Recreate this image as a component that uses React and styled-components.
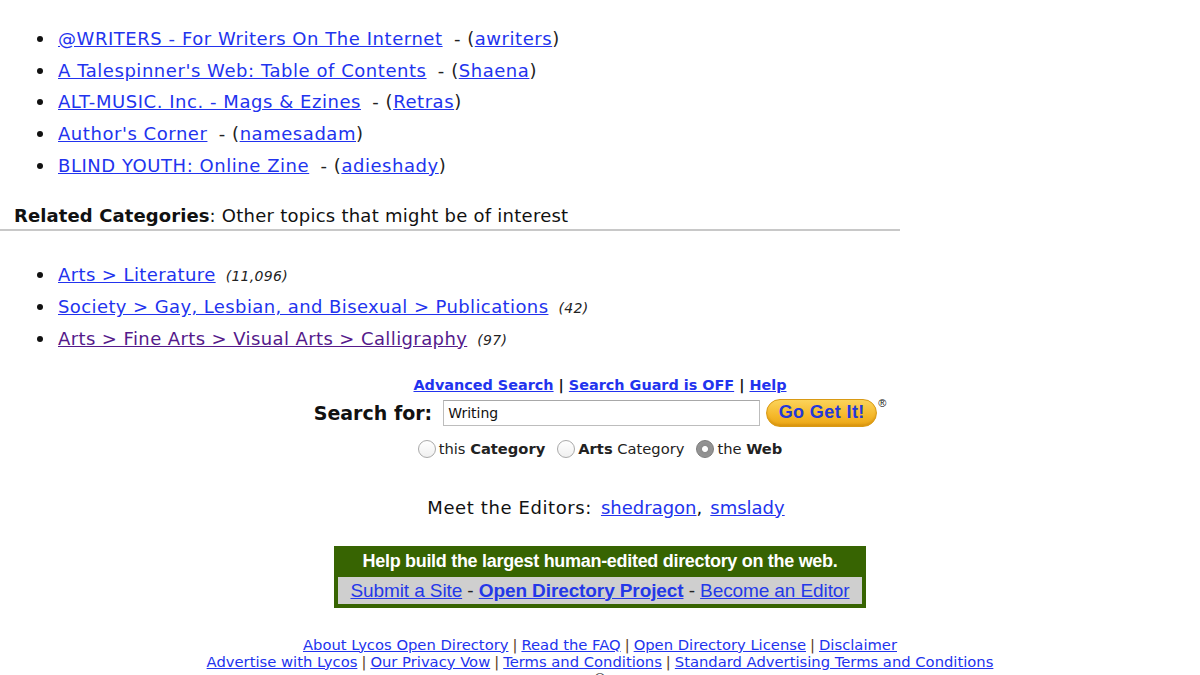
import React from "react";
import styled, { createGlobalStyle } from "styled-components";

const GlobalStyle = createGlobalStyle`
  html, body {
    margin: 0;
    padding: 0;
    background: #ffffff;
    font-family: "DejaVu Sans", Verdana, sans-serif;
    color: #111;
  }
  a { color: #2233ee; }
`;

const Page = styled.div`
  width: 1200px;
  height: 675px;
  overflow: hidden;
  padding-top: 23px;
  box-sizing: border-box;
`;

const Main = styled.div`
  width: 900px;
`;

const List = styled.ul`
  margin: 0;
  padding: 0 0 0 58px;
  list-style: none;
  font-size: 18px;
  letter-spacing: ${(p) => p.$spacing || "0.45px"};

  li {
    position: relative;
    height: 31.7px;
    line-height: 31.7px;
  }
  li::before {
    content: "";
    position: absolute;
    left: -21px;
    top: 13px;
    width: 6px;
    height: 6px;
    border-radius: 50%;
    background: #111;
  }
`;

const Editor = styled.span`
  color: #222;
  margin-left: 5px;
`;

const Count = styled.i`
  font-size: 14px;
  line-height: 1;
  letter-spacing: 0.3px;
  color: #222;
  margin-left: 10px;
`;

const Visited = styled.a`
  color: #551a8b;
`;

const Heading = styled.div`
  margin: 24px 0 0 14px;
  font-size: 18px;
  letter-spacing: 0.25px;
  line-height: 22px;
  b { font-weight: bold; letter-spacing: 0.1px; }
`;

const Rule = styled.hr`
  margin: 2px 0 28px 0;
  border: 0;
  height: 2px;
  background: #c8c8c8;
`;

const SearchArea = styled.div`
  width: 1200px;
  margin-top: 20px;
  display: flex;
  flex-direction: column;
  align-items: center;
`;

const TopLinks = styled.div`
  font-size: 14.4px;
  font-weight: bold;
  line-height: 20px;
  a { color: #2233ee; }
`;

const SearchRow = styled.form`
  margin-top: 4px;
  display: flex;
  align-items: center;
  height: 28px;
`;

const SearchLabel = styled.label`
  font-size: 19px;
  font-weight: bold;
  margin-right: 11px;
`;

const Input = styled.input`
  width: 317px;
  height: 26px;
  box-sizing: border-box;
  border: 1px solid #bdbdbd;
  border-top-color: #a8a8a8;
  padding: 0 4px;
  font-family: "DejaVu Sans", sans-serif;
  font-size: 14px;
  color: #111;
  outline: none;
`;

const GoButton = styled.button`
  margin-left: 6px;
  width: 111px;
  height: 28px;
  border-radius: 14px;
  border: 1px solid #d99a14;
  background: linear-gradient(#fbd35a, #f5b82a 60%, #eaa516);
  box-shadow: inset 0 -2px 2px rgba(190, 120, 0, 0.35);
  color: #2438d8;
  font-family: "Liberation Sans", Arial, sans-serif;
  font-weight: 900;
  font-size: 18px;
  letter-spacing: 0.4px;
  padding: 0;
  cursor: pointer;
`;

const Reg = styled.sup`
  font-size: 11px;
  align-self: flex-start;
  margin-top: -2px;
  margin-left: 1px;
  font-family: "Liberation Sans", sans-serif;
`;

const RadioRow = styled.div`
  margin-top: 12px;
  display: flex;
  align-items: center;
  gap: 12px;
  font-size: 14.7px;
  line-height: 20px;
  color: #222;
`;

const RadioItem = styled.label`
  display: flex;
  align-items: center;
  gap: 3px;
`;

const Circle = styled.span`
  width: 18px;
  height: 18px;
  border-radius: 50%;
  box-sizing: border-box;
  border: 1px solid ${(p) => (p.$on ? "#7a7a7a" : "#a9a9a9")};
  background: ${(p) =>
    p.$on
      ? "radial-gradient(circle, #ffffff 0 2.5px, #8e8e8e 3.5px, #9a9a9a 100%)"
      : "linear-gradient(#ffffff, #f0f0f0)"};
`;

const Meet = styled.div`
  margin-top: 38px;
  font-size: 18px;
  line-height: 22px;
  margin-left: 12px;
  span { margin-right: 9px; letter-spacing: 0.6px; }
  a + a { margin-left: 8px; }
`;

const HelpBox = styled.div`
  margin-top: 27px;
  width: 532px;
  box-sizing: border-box;
  background: #376402;
  padding: 0 4px 4px;
  font-family: "Liberation Sans", Arial, sans-serif;
  text-align: center;
`;

const HelpTitle = styled.div`
  color: #ffffff;
  font-weight: bold;
  font-size: 18px;
  letter-spacing: -0.3px;
  line-height: 31px;
`;

const HelpLinks = styled.div`
  background: #cfcfcf;
  font-size: 19px;
  letter-spacing: -0.1px;
  line-height: 27px;
  color: #222;
  a { color: #2438e8; }
  b a { font-weight: bold; }
`;

const Footer = styled.div`
  margin-top: 28px;
  font-size: 14.75px;
  line-height: 17px;
  text-align: center;
  color: #333;
  a { color: #2233ee; }
`;

const Sep = styled.span`
  color: #5a3a1a;
  margin: 0 4px;
`;

const listings = [
  ["@WRITERS - For Writers On The Internet", "awriters"],
  ["A Talespinner's Web: Table of Contents", "Shaena"],
  ["ALT-MUSIC. Inc. - Mags & Ezines", "Retras"],
  ["Author's Corner", "namesadam"],
  ["BLIND YOUTH: Online Zine", "adieshady"],
];

const related = [
  ["Arts > Literature", "(11,096)", false],
  ["Society > Gay, Lesbian, and Bisexual > Publications", "(42)", false],
  ["Arts > Fine Arts > Visual Arts > Calligraphy", "(97)", true],
];

function FooterLine({ items }) {
  return (
    <div>
      {items.map((t, i) => (
        <React.Fragment key={t}>
          {i > 0 && <Sep>|</Sep>}
          <a href="#">{t}</a>
        </React.Fragment>
      ))}
    </div>
  );
}

export default function App() {
  return (
    <Page>
      <GlobalStyle />
      <Main>
        <List $spacing="0.55px">
          {listings.map(([title, editor]) => (
            <li key={title}>
              <a href="#">{title}</a>
              <Editor>
                {" "}- (<a href="#">{editor}</a>)
              </Editor>
            </li>
          ))}
        </List>
        <Heading>
          <b>Related Categories</b>: Other topics that might be of interest
        </Heading>
        <Rule />
        <List $spacing="0.4px">
          {related.map(([path, count, visited]) => (
            <li key={path}>
              {visited ? <Visited href="#">{path}</Visited> : <a href="#">{path}</a>}
              <Count>{count}</Count>
            </li>
          ))}
        </List>
      </Main>
      <SearchArea>
        <TopLinks>
          <a href="#">Advanced Search</a> | <a href="#">Search Guard is OFF</a> |{" "}
          <a href="#">Help</a>
        </TopLinks>
        <SearchRow onSubmit={(e) => e.preventDefault()}>
          <SearchLabel>Search for:</SearchLabel>
          <Input defaultValue="Writing" />
          <GoButton type="button">Go Get It!</GoButton>
          <Reg>®</Reg>
        </SearchRow>
        <RadioRow>
          <RadioItem>
            <Circle />
            <span>
              this <b>Category</b>
            </span>
          </RadioItem>
          <RadioItem>
            <Circle />
            <span>
              <b>Arts</b> Category
            </span>
          </RadioItem>
          <RadioItem>
            <Circle $on />
            <span>
              the <b>Web</b>
            </span>
          </RadioItem>
        </RadioRow>
        <Meet>
          <span>Meet the Editors:</span>
          <a href="#">shedragon</a>,<a href="#">smslady</a>
        </Meet>
        <HelpBox>
          <HelpTitle>Help build the largest human-edited directory on the web.</HelpTitle>
          <HelpLinks>
            <a href="#">Submit a Site</a> - <b><a href="#">Open Directory Project</a></b> -{" "}
            <a href="#">Become an Editor</a>
          </HelpLinks>
        </HelpBox>
        <Footer>
          <FooterLine
            items={["About Lycos Open Directory", "Read the FAQ", "Open Directory License", "Disclaimer"]}
          />
          <FooterLine
            items={[
              "Advertise with Lycos",
              "Our Privacy Vow",
              "Terms and Conditions",
              "Standard Advertising Terms and Conditions",
            ]}
          />
          <div>©</div>
        </Footer>
      </SearchArea>
    </Page>
  );
}
